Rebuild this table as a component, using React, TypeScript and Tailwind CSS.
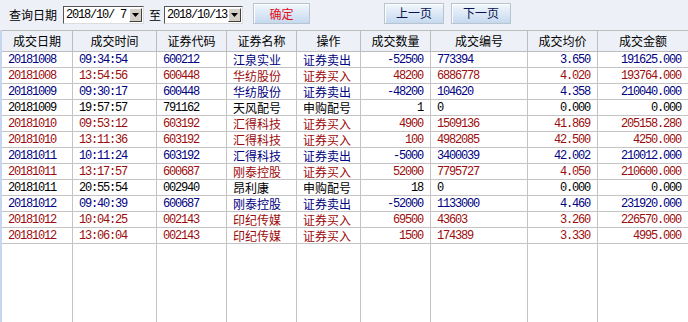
import React from "react";

type Row = {
  d: string; t: string; code: string; name: string; op: string;
  qty: string; no: string; price: string; amt: string; c: "b" | "r" | "k";
};

const rows: Row[] = [
  { d: "20181008", t: "09:34:54", code: "600212", name: "江泉实业", op: "证券卖出", qty: "-52500", no: "773394", price: "3.650", amt: "191625.000", c: "b" },
  { d: "20181008", t: "13:54:56", code: "600448", name: "华纺股份", op: "证券买入", qty: "48200", no: "6886778", price: "4.020", amt: "193764.000", c: "r" },
  { d: "20181009", t: "09:30:17", code: "600448", name: "华纺股份", op: "证券卖出", qty: "-48200", no: "104620", price: "4.358", amt: "210040.000", c: "b" },
  { d: "20181009", t: "19:57:57", code: "791162", name: "天风配号", op: "申购配号", qty: "1", no: "0", price: "0.000", amt: "0.000", c: "k" },
  { d: "20181010", t: "09:53:12", code: "603192", name: "汇得科技", op: "证券买入", qty: "4900", no: "1509136", price: "41.869", amt: "205158.280", c: "r" },
  { d: "20181010", t: "13:11:36", code: "603192", name: "汇得科技", op: "证券买入", qty: "100", no: "4982085", price: "42.500", amt: "4250.000", c: "r" },
  { d: "20181011", t: "10:11:24", code: "603192", name: "汇得科技", op: "证券卖出", qty: "-5000", no: "3400039", price: "42.002", amt: "210012.000", c: "b" },
  { d: "20181011", t: "13:17:57", code: "600687", name: "刚泰控股", op: "证券买入", qty: "52000", no: "7795727", price: "4.050", amt: "210600.000", c: "r" },
  { d: "20181011", t: "20:55:54", code: "002940", name: "昂利康", op: "申购配号", qty: "18", no: "0", price: "0.000", amt: "0.000", c: "k" },
  { d: "20181012", t: "09:40:39", code: "600687", name: "刚泰控股", op: "证券卖出", qty: "-52000", no: "1133000", price: "4.460", amt: "231920.000", c: "b" },
  { d: "20181012", t: "10:04:25", code: "002143", name: "印纪传媒", op: "证券买入", qty: "69500", no: "43603", price: "3.260", amt: "226570.000", c: "r" },
  { d: "20181012", t: "13:06:04", code: "002143", name: "印纪传媒", op: "证券买入", qty: "1500", no: "174389", price: "3.330", amt: "4995.000", c: "r" },
];

const headers = ["成交日期", "成交时间", "证券代码", "证券名称", "操作", "成交数量", "成交编号", "成交均价", "成交金额"];
const widths = ["w-[71px]", "w-[84px]", "w-[70px]", "w-[70px]", "w-[64px]", "w-[70px]", "w-[97px]", "w-[70px]", "w-[90px]"];

const cjk = "font-['Noto_Sans_CJK_SC','Noto_Sans',sans-serif]";
const num = "font-['Liberation_Mono',monospace] tracking-[-1.2px]";

function Select({ value, w }: { value: string; w: string }) {
  return (
    <div className={`${w} h-[18px] bg-white border border-t-[#555] border-l-[#555] border-b-[#ddd] border-r-[#ddd] flex items-center justify-between pl-[2px] pr-[1px]`}>
      <span className={`${num} text-[12px] text-black whitespace-pre leading-none`}>{value}</span>
      <div className="w-[13px] h-[14px] bg-[#d4d0c8] border border-t-white border-l-white border-b-[#404040] border-r-[#404040] flex items-center justify-center">
        <svg width="7" height="4" viewBox="0 0 7 4"><path d="M0 0H7L3.5 4Z" fill="#000" /></svg>
      </div>
    </div>
  );
}

function Btn({ label, w, color }: { label: string; w: string; color: string }) {
  return (
    <div className={`${w} h-[21px] border border-[#b8c4d0] bg-gradient-to-b from-[#f2f7fc] to-[#c6d9ef] flex items-center justify-center shadow-[inset_1px_1px_0_#fff]`}>
      <span className={`${cjk} text-[12px] leading-none ${color}`}>{label}</span>
    </div>
  );
}

export default function App() {
  const colorOf = (c: Row["c"]) => (c === "b" ? "text-[#000080]" : c === "r" ? "text-[#9c0c0c]" : "text-black");
  return (
    <div className="w-[688px] h-[322px] bg-[#edf1f7] flex flex-col overflow-hidden">
      <div className="h-[30px] flex items-center shrink-0">
        <span className={`${cjk} text-[12px] text-black ml-[9px] mr-[6px] leading-none`}>查询日期</span>
        <Select value="2018/10/ 7" w="w-[81px]" />
        <span className={`${cjk} text-[12px] text-black ml-[5px] mr-[3px] leading-none`}>至</span>
        <Select value="2018/10/13" w="w-[79px]" />
        <div className="ml-[10px] mt-[-3px]"><Btn label="确定" w="w-[57px]" color="text-[#e0101a]" /></div>
        <div className="ml-[74px] mt-[-4px]"><Btn label="上一页" w="w-[60px]" color="text-[#0a1450]" /></div>
        <div className="ml-[7px] mt-[-4px]"><Btn label="下一页" w="w-[60px]" color="text-[#0a1450]" /></div>
      </div>
      <div className="flex flex-1 min-h-0">
        <div className="w-[2px] bg-[#c6d6ee] shrink-0" />
        <div className="flex-1 bg-white flex flex-col">
          <div className="flex h-[22px] bg-[#edf1f7] border-t border-b border-[#bdbdbd] shrink-0">
            {headers.map((h, i) => (
              <div key={h} className={`${widths[i]} shrink-0 flex items-center justify-center ${i < 8 ? "border-r border-[#bdbdbd]" : ""}`}>
                <span className={`${cjk} text-[12px] text-black leading-none`}>{h}</span>
              </div>
            ))}
          </div>
          {rows.map((r, ri) => {
            const col = colorOf(r.c);
            const cells: { v: string; right?: boolean; cn?: boolean }[] = [
              { v: r.d }, { v: r.t }, { v: r.code }, { v: r.name, cn: true }, { v: r.op, cn: true },
              { v: r.qty, right: true }, { v: r.no }, { v: r.price, right: true }, { v: r.amt, right: true },
            ];
            return (
              <div key={ri} className="flex h-[16px] border-b border-[#c4c4c4] shrink-0">
                {cells.map((c, i) => (
                  <div key={i} className={`${widths[i]} shrink-0 flex items-center ${c.right ? "justify-end pr-[7px]" : "justify-start pl-[6px]"} ${i < 8 ? "border-r border-[#c4c4c4]" : ""}`}>
                    <span className={`${c.cn ? cjk : num} text-[12px] leading-none whitespace-pre ${col}`}>{c.v}</span>
                  </div>
                ))}
              </div>
            );
          })}
          <div className="flex flex-1">
            {widths.map((w, i) => (
              <div key={i} className={`${w} shrink-0 ${i < 8 ? "border-r border-[#c4c4c4]" : ""}`} />
            ))}
          </div>
        </div>
      </div>
    </div>
  );
}
